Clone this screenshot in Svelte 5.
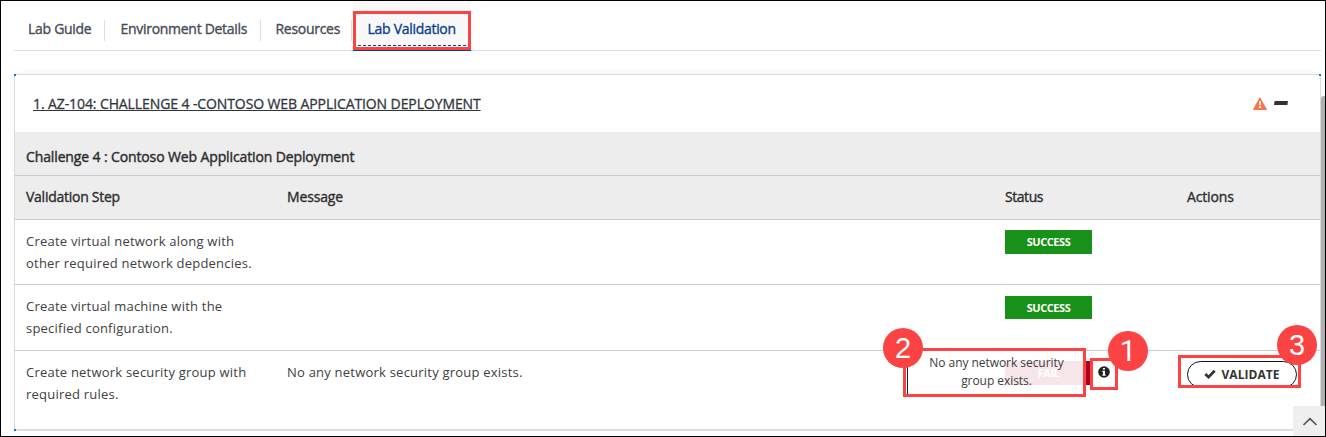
<script>
  const tabs = ['Lab Guide', 'Environment Details', 'Resources', 'Lab Validation'];
  const active = 'Lab Validation';

  const rows = [
    { step: ['Create virtual network along with', 'other required network depdencies.'], message: '', status: 'SUCCESS' },
    { step: ['Create virtual machine with the', 'specified configuration.'], message: '', status: 'SUCCESS' },
    {
      step: ['Create network security group with', 'required rules.'],
      message: 'No any network security group exists.',
      status: 'FAIL'
    }
  ];
</script>

<div class="frame">
  <nav class="tabs">
    {#each tabs as tab}
      <div class="tab" class:active={tab === active}><span>{tab}</span></div>
    {/each}
  </nav>

  <section class="card">
    <i class="corner tl"></i><i class="corner tr"></i><i class="corner bl"></i>
    <header class="title">
      <span class="link">1. AZ-104: CHALLENGE 4 -CONTOSO WEB APPLICATION DEPLOYMENT</span>
      <svg class="warn" width="14" height="13" viewBox="0 0 14 13">
        <path d="M7 .3 13.8 12.1Q14 13 13.1 13H.9Q0 13 .2 12.1L6.5.6Q7 0 7.5.6Z" fill="#f4784a" />
        <path d="M6 4.3h2L7.7 8.2H6.3ZM6.1 9.3h1.8V11H6.1Z" fill="#fff" />
      </svg>
      <svg class="minus" width="14" height="4" viewBox="0 0 14 4"><path d="M.6 0H14L13.4 4H0Z" fill="#333" /></svg>
    </header>
    <div class="group">Challenge 4 : Contoso Web Application Deployment</div>
    <div class="grid head">
      <span class="h1">Validation Step</span><span>Message</span><span class="h3">Status</span><span>Actions</span>
    </div>
    {#each rows as row}
      <div class="grid row" class:failed={row.status === 'FAIL'}>
        <div class="step">{row.step[0]}<br />{row.step[1]}</div>
        <div>{row.message}</div>
        <div class="status">
          <span class="badge" class:fail={row.status === 'FAIL'}>{row.status}</span>
          {#if row.status === 'FAIL'}
            <svg class="info" width="12" height="12" viewBox="0 0 12 12">
              <circle cx="6" cy="6" r="5.8" fill="#222" />
              <path d="M5 2h2v1.6H5ZM4.3 4.8H7v3.6h.7v1.3H4.3V8.4H5V6h-.7Z" fill="#fff" />
            </svg>
          {/if}
        </div>
        <div>
          {#if row.status === 'FAIL'}
            <button class="validate">
              <svg width="12" height="10" viewBox="0 0 12 10"><path d="M1.3 5 4.5 8.1 10.7 1.7" fill="none" stroke="#333" stroke-width="2.7" /></svg>
              VALIDATE
            </button>
          {/if}
        </div>
      </div>
    {/each}
  </section>

  <div class="scroll"></div>
  <div class="totop">
    <svg width="16" height="9" viewBox="0 0 16 9"><path d="M1.5 8 8 1.6 14.5 8" fill="none" stroke="#555" stroke-width="1.7" /></svg>
  </div>

  <div class="tooltip">No any network security<br />group exists.</div>
  <div class="mark m-tab"></div>
  <div class="mark m-info"></div>
  <div class="mark m-validate"></div>
  <div class="num n2">2</div>
  <div class="num n1">1</div>
  <div class="num n3">3</div>
</div>

<style>
  .frame {
    position: relative;
    box-sizing: border-box;
    width: 1326px;
    height: 437px;
    border: 1px solid #000;
    padding: 0 4px 0 13px;
    overflow: hidden;
    background: #fff;
    color: #333;
    font: 14px/20px 'Open Sans', 'Noto Sans', sans-serif;
  }
  .tabs {
    display: flex;
    height: 49px;
    border-bottom: 1px solid #dcdde6;
    margin-bottom: 23px;
    color: #464b55;
    letter-spacing: -0.29px;
    -webkit-text-stroke: 0.35px currentColor;
    white-space: nowrap;
  }
  .tab {
    box-sizing: border-box;
    width: 156px;
    padding: 18px 0 0 15.5px;
    background: linear-gradient(#dcdde6, #dcdde6) right 19px / 1px 21px no-repeat;
  }
  .tab:first-child { width: 91px; padding-left: 14px; }
  .tab:nth-child(3) { width: 91px; padding-left: 14.5px; }
  .tab.active {
    width: 118px;
    height: 50px;
    margin-left: 1px;
    padding-left: 14.5px;
    background: linear-gradient(90deg, #0b3f8c 60%, transparent 0) 0 44px / 5px 1px repeat-x, #f8f8f8;
    border-bottom: 1px solid #0b3f8c;
    color: #0b3f8c;
  }
  .card {
    position: relative;
    box-sizing: border-box;
    width: 1307px;
    height: 357px;
    border: 1px solid #dadada;
    border-bottom: 2px solid #ddd;
    box-shadow: 0 -3px 6px rgba(0, 0, 0, 0.035);
  }
  .corner { position: absolute; width: 2px; height: 2px; background: #0878c8; }
  .tl { left: -1px; top: -1px; }
  .tr { right: -1px; top: -1px; }
  .bl { left: -1px; bottom: -2px; }
  .title {
    display: flex;
    align-items: center;
    box-sizing: border-box;
    height: 57px;
    padding: 0 32px 0 18px;
  }
  .link {
    margin-right: auto;
    padding-top: 1px;
    letter-spacing: -0.1px;
    -webkit-text-stroke: 0.3px currentColor;
    color: #32363d;
    text-decoration: underline;
    text-decoration-thickness: 1px;
    text-underline-offset: 1px;
    text-decoration-skip-ink: none;
  }
  .warn { margin-right: 7px; }
  .minus { margin-bottom: 2px; }
  .group, .head { background: #ededed; border-bottom: 1px solid #ccc; color: #2c2c2c; height: 43px; }
  .group {
    box-sizing: border-box;
    height: 44px;
    padding: 15px 0 0 11px;
    letter-spacing: -0.125px;
    -webkit-text-stroke: 0.4px currentColor;
  }
  .grid {
    display: grid;
    grid-template-columns: 261px 718px 182px 1fr;
    padding-left: 11px;
  }
  .head { line-height: 42px; letter-spacing: -0.15px; -webkit-text-stroke: 0.35px currentColor; }
  .h1 { letter-spacing: -0.26px; }
  .h3 { letter-spacing: -0.45px; }
  .row {
    box-sizing: border-box;
    height: 65px;
    padding-top: 10px;
    border-bottom: 1px solid #ccc;
    color: #404040;
    font-size: 13px;
    line-height: 22px;
    letter-spacing: 0.22px;
  }
  .row + .row { height: 66px; padding-top: 11px; line-height: 21.5px; }
  .row + .row.failed { border: 0; padding-top: 10px; line-height: 22px; }
  .status { display: flex; align-items: flex-start; }
  .badge {
    width: 87px;
    height: 24px;
    background: #189118;
    color: #fff;
    font-size: 11px;
    font-weight: 700;
    line-height: 24px;
    letter-spacing: -0.45px;
    text-align: center;
  }
  .row + .row:not(.failed) .badge { height: 23px; line-height: 23px; }
  .badge.fail { background: #b00020; }
  .info { margin: 5px 0 0 6px; }
  .validate {
    display: flex;
    align-items: center;
    justify-content: center;
    gap: 5px;
    box-sizing: border-box;
    width: 110px;
    height: 27px;
    padding: 0 0 1px;
    border: 1px solid #111;
    border-radius: 14px;
    background: #fff;
    color: #333;
    font: 700 12px 'Open Sans', sans-serif;
    letter-spacing: 0.05px;
  }
  .scroll { position: absolute; left: 1320px; top: 95px; width: 4px; height: 341px; border-radius: 3px 0 0 0; background: #b0b0b0; }
  .totop {
    position: absolute;
    left: 1292px;
    top: 405px;
    width: 32px;
    height: 30px;
    background: #efefef;
    display: grid;
    place-items: center;
    padding-top: 1px;
    padding-left: 1px;
    box-sizing: border-box;
  }
  .tooltip {
    position: absolute;
    box-sizing: border-box;
    left: 902px;
    top: 347px;
    width: 183px;
    height: 49px;
    padding: 3px 0 0 4px;
    border: 3px solid #fc4343;
    background: linear-gradient(#222, #222) 1px 0 / 1px 100% no-repeat, rgba(255, 255, 255, 0.9);
    color: #3c3c3c;
    font-size: 12px;
    line-height: 18px;
    letter-spacing: -0.05px;
    text-align: center;
  }
  .mark { position: absolute; box-sizing: border-box; border: 3px solid #fc4343; }
  .m-tab { left: 352px; top: 10px; width: 118px; height: 39px; }
  .m-info { left: 1089px; top: 357px; width: 28px; height: 32px; }
  .m-validate { left: 1177px; top: 354px; width: 123px; height: 33px; }
  .num {
    position: absolute;
    width: 40px;
    height: 40px;
    border-radius: 50%;
    background: #fc4343;
    color: #fff;
    font: 29px/40px 'Liberation Sans', Arial, sans-serif;
    text-align: center;
  }
  .n2 { left: 882px; top: 327px; }
  .n1 { left: 1107px; top: 330px; font-family: Roboto, sans-serif; }
  .n3 { left: 1276px; top: 324px; }
</style>
